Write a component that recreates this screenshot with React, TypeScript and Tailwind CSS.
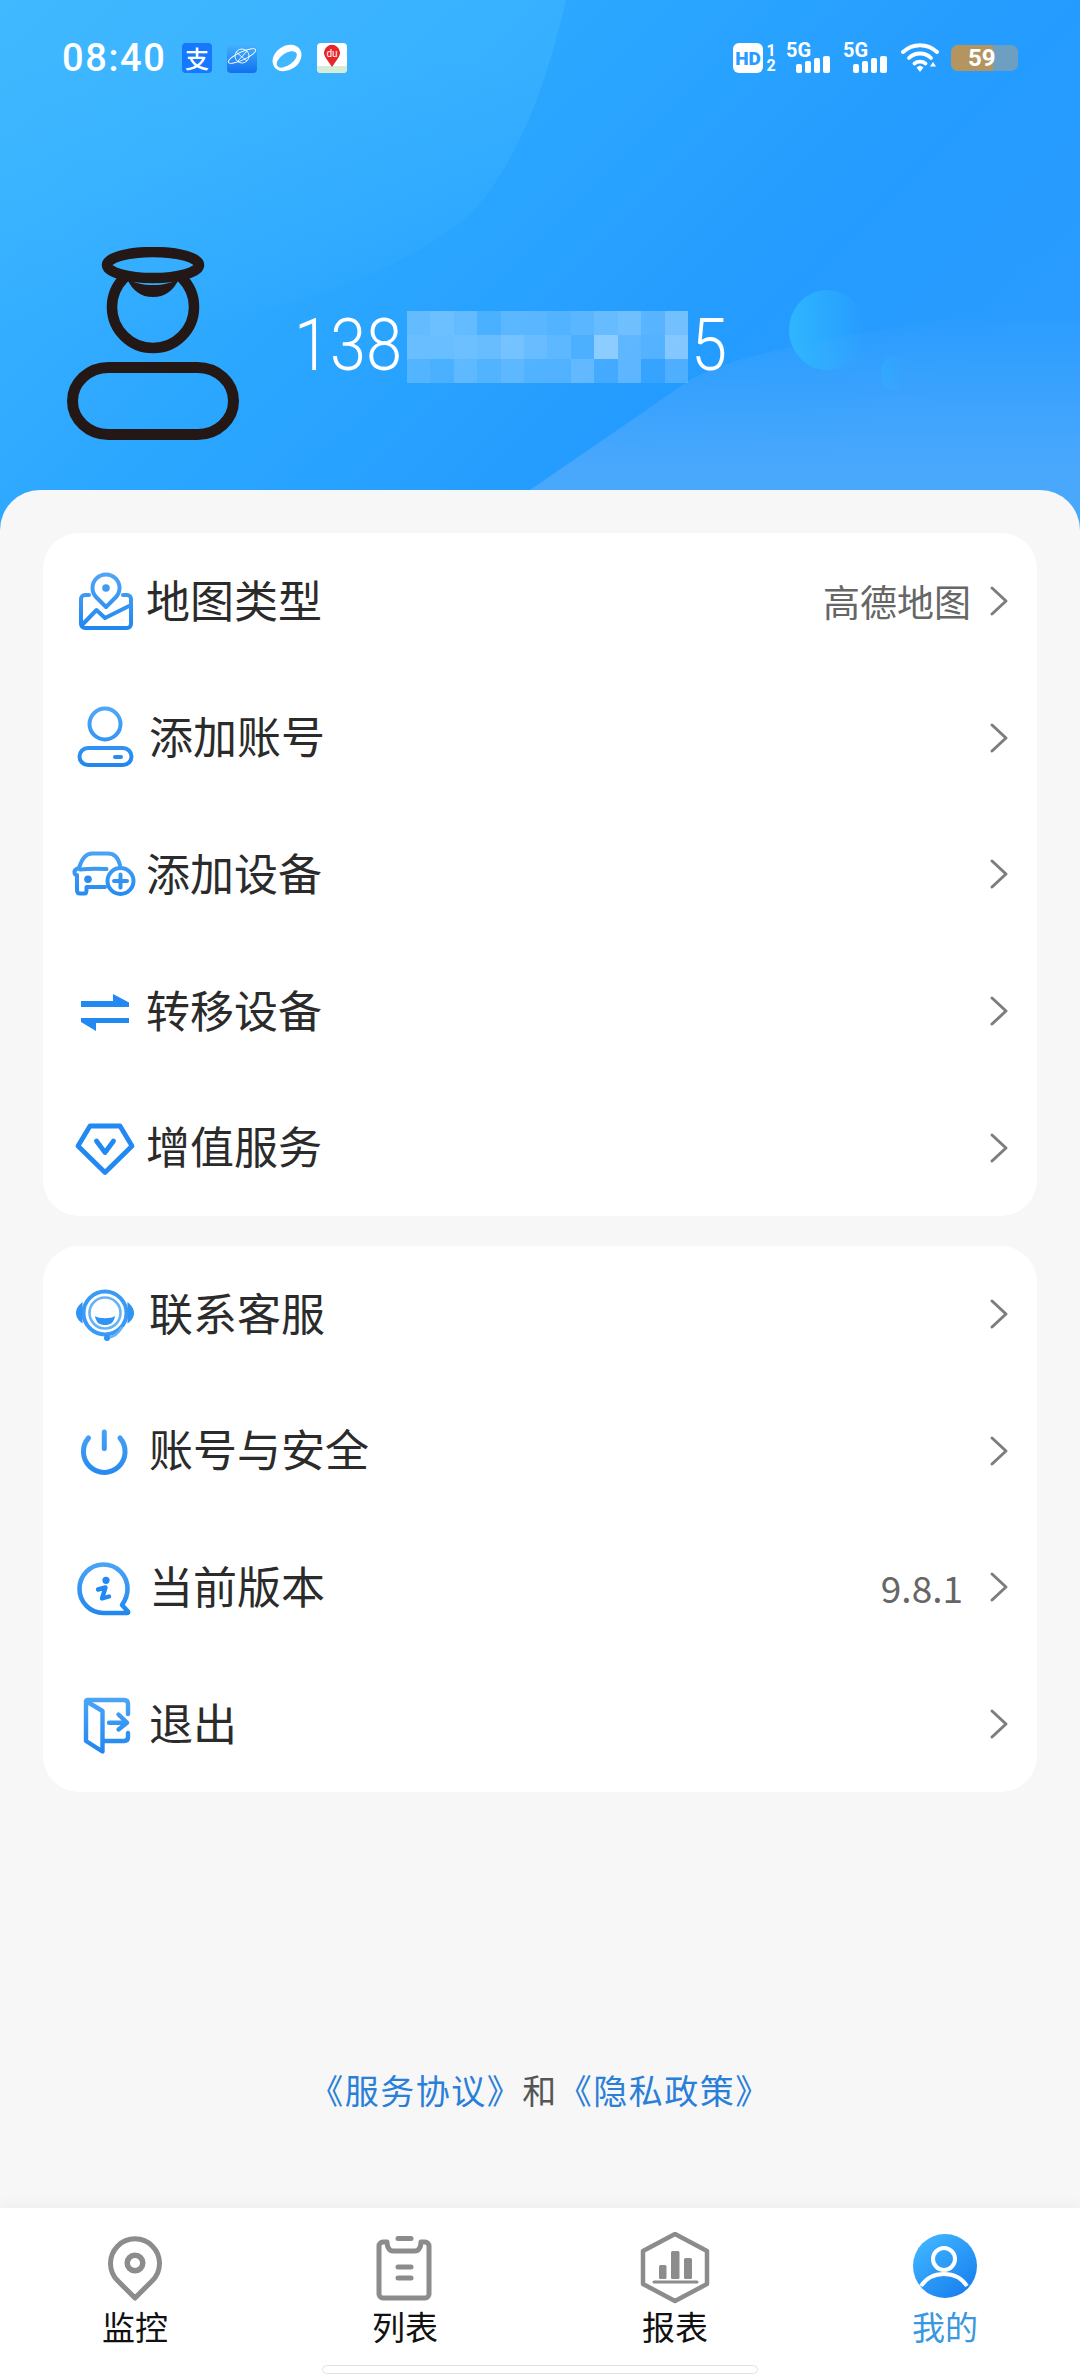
import React from 'react';

const CJK = "font-['Noto_Sans_CJK_SC','Noto_Sans',sans-serif]";

// stroke/fill shortcuts for the blue menu glyphs
const blue = { fill: 'none', stroke: 'url(#menuBlue)', strokeLinecap: 'round', strokeLinejoin: 'round' } as const;

const Icon72: React.FC<{ children: React.ReactNode }> = ({ children }) => (
    <svg width="72" height="72" viewBox="0 0 72 72" className="block">{children}</svg>
);

const MapIcon = () => (
    <Icon72>
        <g {...blue} strokeWidth="4">
            <path d="M20 30H16a4 4 0 0 0-4 4V59a4 4 0 0 0 4 4H58a4 4 0 0 0 4-4V34a4 4 0 0 0-4-4H54" />
            <path d="M37 42L27.5 32.5A13.5 13.5 0 1 1 46.5 32.5Z" />
            <path d="M14 59L27.5 45L36 53L60 41" />
        </g>
        <circle cx="37" cy="23" r="3.8" fill="#3f9bf3" />
    </Icon72>
);

const UserIcon = () => (
    <Icon72>
        <g {...blue} strokeWidth="4">
            <circle cx="36" cy="22" r="15.5" />
            <rect x="10.5" y="46" width="52" height="17" rx="8.5" />
        </g>
        <path d="M46 55H52" stroke="#2a8cf0" strokeWidth="4" strokeLinecap="round" />
    </Icon72>
);

const CarIcon = () => (
    <Icon72>
        <g {...blue} strokeWidth="4">
            <path d="M51 27C49 19 45 15.5 39 15.5H23C17 15.5 13 20 10 30C7 31 5 33 5.5 35C6 37 8 37 8 37V52C8 54 9 55.5 11 55.5H15.5C17 55.5 17.5 54 17.5 52V49H36" />
            <path d="M11 31.5C20 30.5 30 30.5 37.5 31" />
            <circle cx="51.5" cy="43" r="13" />
            <path d="M51.5 36.5V49.5M45 43H58" />
        </g>
        <circle cx="19" cy="41.3" r="3.8" fill="#2a8cf0" />
    </Icon72>
);

const TransferIcon = () => (
    <Icon72>
        <polygon points="12,26 44,26 44,19 60,27.5 60,32 12,32" fill="#2389f2" />
        <polygon points="60,43 60,48 27,48 27,56 12,47 12,43" fill="#2389f2" />
    </Icon72>
);

const DiamondIcon = () => (
    <Icon72>
        <g fill="none" stroke="#2389f2" strokeWidth="4.8" strokeLinejoin="round" strokeLinecap="round">
            <path d="M21 14H51L63 34L36 60.5L9 34Z" />
            <path d="M27.5 29L36 40.5L44.5 29" />
        </g>
    </Icon72>
);

const HeadsetIcon = () => (
    <Icon72>
        <circle cx="36" cy="35" r="21.5" fill="none" stroke="#3a9af5" strokeWidth="4" />
        <circle cx="36" cy="35" r="15.5" fill="none" stroke="#66b3f7" strokeWidth="2.6" />
        <path d="M13.5 24C9.5 27 7 31 7 35C7 39 9.5 43 13.5 45.5Z" fill="#2f94f4" />
        <path d="M58.5 24C62.5 27 65 31 65 35C65 39 62.5 43 58.5 45.5Z" fill="#2f94f4" />
        <path d="M26 38C30 41 42 41 46 38C45 45 41 47 36 47C31 47 27 45 26 38Z" fill="#2f94f4" />
        <path d="M53 49C50 55 46 59 38 60" fill="none" stroke="#66b3f7" strokeWidth="2.6" />
        <circle cx="38" cy="60" r="3" fill="#2f94f4" />
    </Icon72>
);

const PowerIcon = () => (
    <Icon72>
        <g {...blue} strokeWidth="5">
            <path d="M19.5 23A20.8 20.8 0 1 0 51 23" />
            <path d="M35.3 17V33.5" />
        </g>
    </Icon72>
);

const InfoIcon = () => (
    <Icon72>
        <g {...blue} strokeWidth="4.6">
            <path d="M34.5 62C21 62 10.5 51 10.5 38C10.5 24.5 21 13.5 34.5 13.5C48 13.5 58.5 24.5 58.5 38C58.5 44 56.5 49 53 54L59 60.5C59.5 61.5 59 62 58 62Z" />
        </g>
        <circle cx="37" cy="29.3" r="3.6" fill="#2389f2" />
        <path d="M29 38.5L36.5 36.5L33 47.5L40 45.5" fill="none" stroke="#2389f2" strokeWidth="4.4" strokeLinecap="round" strokeLinejoin="round" />
    </Icon72>
);

const ExitIcon = () => (
    <Icon72>
        <g {...blue} strokeWidth="4.4">
            <path d="M18 12H55C57.5 12 59 13.5 59 16V26" />
            <path d="M59 45V49C59 51.5 57.5 53 55 53H34" />
            <path d="M17 13V53L33.5 63.5V23Z" />
            <path d="M40 34.7H58M49.5 26.5L58 34.7L49.5 41.5" />
        </g>
    </Icon72>
);

const Chevron = () => (
    <svg width="20" height="32" viewBox="0 0 20 32" className="block ml-[18px]">
        <path d="M3 3L17 16L3 29" fill="none" stroke="#7d7d7d" strokeWidth="3" strokeLinecap="round" strokeLinejoin="round" />
    </svg>
);

interface MenuRowProps {
    icon: React.ReactNode;
    label: string;
    value?: string;
    shifted?: boolean;
    valueGap?: boolean;
}

const MenuRow: React.FC<MenuRowProps> = ({ icon, label, value, shifted, valueGap }) => (
    <div className="h-[136.6px] flex items-center pl-[26px] pr-[28px]">
        <div className="w-[72px] h-[72px] shrink-0">{icon}</div>
        <span className={`${shifted ? 'ml-[8px]' : 'ml-[5px]'} mt-[-5px] text-[44px] leading-none text-[#2b2b2b] ${CJK}`}>{label}</span>
        <div className="ml-auto flex items-center">
            {value && (
                <span className={`${valueGap ? 'mr-[8px]' : ''} text-[37px] leading-none text-[#666666] ${CJK}`}>{value}</span>
            )}
            <Chevron />
        </div>
    </div>
);

// blurred tiles over the middle of the phone number
const mosaic = [
    [0.28, 0.32, 0.28, 0.16, 0.24, 0.24, 0.2, 0.24, 0.3, 0.34, 0.24, 0.36],
    [0.3, 0.3, 0.32, 0.3, 0.36, 0.3, 0.26, 0.18, 0.48, 0.26, 0.22, 0.44],
    [0.2, 0.16, 0.26, 0.2, 0.26, 0.2, 0.2, 0.28, 0.14, 0.26, 0.08, 0.2],
];

const PhoneNumber = () => (
    <div className="flex items-start ml-[55px] mt-[6px]">
        <span className="font-['Roboto',sans-serif] font-light text-[65px] leading-[72px] text-white w-[113px] mt-[-6px] scale-y-[1.12] origin-top">138</span>
        <div className="grid grid-cols-12 w-[281px]">
            {mosaic.flat().map((a, i) => (
                <div key={i} className="h-[24px] bg-white" style={{ opacity: a }} />
            ))}
        </div>
        <span className="font-['Roboto',sans-serif] font-light text-[65px] leading-[72px] text-white ml-[3px] mt-[-6px] scale-y-[1.12] origin-top">5</span>
    </div>
);

const Avatar = () => (
    <svg width="172" height="194" viewBox="0 0 172 194" className="block shrink-0">
        <g fill="none" stroke="#231815">
            <circle cx="86" cy="60" r="41" strokeWidth="10.5" />
            <rect x="5.5" y="120.500" width="161" height="67" rx="36" strokeWidth="11" />
            <ellipse cx="86" cy="18" rx="46" ry="13" strokeWidth="10.5" fill="#35aeff" />
        </g>
        <path d="M60 32C66 44 74 50 86 50C98 50 106 44 112 32C98 40 74 40 60 32Z" fill="#231815" />
    </svg>
);

const StatusLeft = () => (
    <div className="flex items-center">
        <span className="font-['Roboto',sans-serif] font-medium text-[38px] leading-none tracking-[1.6px] text-white w-[120px]">08:40</span>
        <div className={`w-[30px] h-[30px] rounded-[4px] bg-[#1677ff] flex items-center justify-center text-white text-[24px] leading-none font-medium ${CJK}`}>支</div>
        <svg width="30" height="30" viewBox="0 0 30 30" className="block ml-[15px]">
            <defs>
                <linearGradient id="planetTile" x1="0" y1="0" x2="0" y2="1">
                    <stop offset="0" stopColor="#45b4ff" />
                    <stop offset="1" stopColor="#1270ee" />
                </linearGradient>
            </defs>
            <rect width="30" height="30" rx="4" fill="url(#planetTile)" />
            <g fill="none" stroke="#ffffff" strokeWidth="0.9">
                <circle cx="15" cy="13" r="7" />
                <ellipse cx="15" cy="13" rx="15" ry="4" transform="rotate(-25 15 13)" />
                <path d="M9 9L20 18M20 8L11 18" />
            </g>
        </svg>
        <svg width="30" height="30" viewBox="0 0 30 30" className="block ml-[15px]">
            <ellipse cx="15" cy="15" rx="15.5" ry="12" fill="#ffffff" transform="rotate(-35 15 15)" />
            <ellipse cx="14" cy="16" rx="11.5" ry="6" fill="#41b7ff" transform="rotate(-35 15 15)" />
        </svg>
        <div className="relative w-[30px] h-[30px] ml-[15px] rounded-[4px] bg-white overflow-hidden">
            <div className="absolute bottom-0 left-0 right-0 h-[7px] bg-[#d6ecd8]" />
            <svg width="30" height="30" viewBox="0 0 30 30" className="absolute inset-0">
                <path d="M15 24L8.5 14.5A8 8 0 1 1 21.5 14.5Z" fill="#e8252b" />
            </svg>
            <span className="absolute top-[4px] left-0 right-0 text-center text-white text-[10px] leading-[14px] font-['Roboto',sans-serif]">du</span>
        </div>
    </div>
);

const Signal = () => (
    <div className="relative w-[45px] h-[30px]">
        <span className="absolute left-0 top-0 font-['Roboto',sans-serif] font-bold text-[20px] leading-[15px] text-white">5G</span>
        <div className="absolute left-[10px] bottom-0 flex items-end gap-[3px]">
            <div className="w-[6px] h-[9px] rounded-[2px] bg-white" />
            <div className="w-[6px] h-[12px] rounded-[2px] bg-white" />
            <div className="w-[6px] h-[15px] rounded-[2px] bg-white" />
            <div className="w-[7px] h-[17px] rounded-[2px] bg-white" />
        </div>
    </div>
);

const StatusRight = () => (
    <div className="flex items-center">
        <div className="w-[30px] h-[30px] rounded-[6px] bg-white flex items-center justify-center font-['Roboto',sans-serif] font-black text-[19px] leading-none text-[#2a9cff]">HD</div>
        <div className="w-[12px] ml-[2px] flex flex-col items-center font-['Roboto',sans-serif] font-bold text-[16px] leading-[15px] text-white">
            <span>1</span>
            <span>2</span>
        </div>
        <div className="ml-[9px]"><Signal /></div>
        <div className="ml-[12px]"><Signal /></div>
        <svg width="38" height="30" viewBox="0 0 38 30" className="block ml-[13px]">
            <g fill="none" stroke="#ffffff" strokeWidth="3.8" strokeLinecap="round">
                <path d="M2 9C12 0 26 0 36 9" />
                <path d="M8 15C14 9 24 9 30 15" />
                <path d="M13.5 20.5C16.5 18 21.5 18 24.5 20.5" />
            </g>
            <path d="M15.5 24.5L19 22.5L22.5 24.5L19 29Z" fill="#ffffff" />
            <path d="M32 19L35 23.5H29Z" fill="#ffffff" />
        </svg>
        <div className="relative w-[67px] h-[26px] ml-[12px] rounded-[7px] bg-[#6f9fc0]">
            <div className="absolute left-0 top-0 bottom-0 w-[42px] rounded-l-[7px] bg-[#b4955f]" />
            <span className="absolute left-[17px] top-0 font-['Roboto',sans-serif] font-bold text-[24px] leading-[26px] text-white">59</span>
        </div>
    </div>
);

const HeaderBackdrop = () => (
    <svg width="1080" height="530" viewBox="0 0 1080 530" className="absolute left-0 top-0">
        <defs>
            <linearGradient id="headerBase" x1="0" y1="0" x2="1" y2="0.5">
                <stop offset="0" stopColor="#3db6ff" />
                <stop offset="0.5" stopColor="#2aa5ff" />
                <stop offset="0.8" stopColor="#249bff" />
                <stop offset="1" stopColor="#2a9cff" />
            </linearGradient>
            <linearGradient id="bubble" x1="0" y1="0" x2="1" y2="0">
                <stop offset="0" stopColor="#2fb6ff" />
                <stop offset="1" stopColor="#2fb6ff" stopOpacity="0" />
            </linearGradient>
            <linearGradient id="glow" gradientUnits="userSpaceOnUse" x1="300" y1="60" x2="300" y2="340">
                <stop offset="0" stopColor="#46bcff" stopOpacity="0.4" />
                <stop offset="1" stopColor="#46bcff" stopOpacity="0" />
            </linearGradient>
            <linearGradient id="slope" gradientUnits="userSpaceOnUse" x1="0" y1="310" x2="0" y2="470">
                <stop offset="0" stopColor="#4aa8fc" stopOpacity="0" />
                <stop offset="1" stopColor="#4aa8fc" />
            </linearGradient>
        </defs>
        <rect width="1080" height="530" fill="url(#headerBase)" />
        <path d="M0 0H566C540 110 510 170 470 215C380 290 200 340 0 350Z" fill="url(#glow)" />
        <path d="M530 490L690 380C760 340 960 320 1080 300V530H530Z" fill="url(#slope)" />
        <ellipse cx="827" cy="330" rx="38" ry="40" fill="url(#bubble)" />
        <ellipse cx="893" cy="373" rx="12" ry="17" fill="url(#bubble)" opacity="0.4" />
    </svg>
);

interface TabProps {
    label: string;
    active?: boolean;
    children: React.ReactNode;
}

const Tab: React.FC<TabProps> = ({ label, active, children }) => (
    <div className="flex-1 flex flex-col items-center">
        <div className="h-[72px]">{children}</div>
        <span className={`mt-[2px] text-[33px] leading-[40px] ${active ? 'text-[#3a97e0]' : 'text-[#111111]'} ${CJK}`}>{label}</span>
    </div>
);

export default function App() {
    return (
        <div className="relative w-[1080px] h-[2376px] overflow-hidden flex flex-col bg-[#f7f7f7]">
            <HeaderBackdrop />

            <svg width="0" height="0" className="absolute">
                <defs>
                    <linearGradient id="menuBlue" gradientUnits="userSpaceOnUse" x1="0" y1="8" x2="0" y2="66">
                        <stop offset="0" stopColor="#4ea6f6" />
                        <stop offset="1" stopColor="#1f86f0" />
                    </linearGradient>
                </defs>
            </svg>

            <div className="relative h-[490px] shrink-0 px-[62px]">
                <div className="flex items-center justify-between pt-[39px]">
                    <StatusLeft />
                    <StatusRight />
                </div>
                <div className="flex items-center mt-[170px] ml-[5px]">
                    <Avatar />
                    <PhoneNumber />
                </div>
            </div>

            <div className="relative flex-1 flex flex-col rounded-t-[40px] bg-[#f7f7f7] px-[43px] pt-[43px]">
                <div className="rounded-[36px] bg-white">
                    <MenuRow icon={<MapIcon />} label="地图类型" value="高德地图" />
                    <MenuRow icon={<UserIcon />} label="添加账号" shifted />
                    <MenuRow icon={<CarIcon />} label="添加设备" />
                    <MenuRow icon={<TransferIcon />} label="转移设备" />
                    <MenuRow icon={<DiamondIcon />} label="增值服务" />
                </div>
                <div className="mt-[30px] rounded-[36px] bg-white">
                    <MenuRow icon={<HeadsetIcon />} label="联系客服" shifted />
                    <MenuRow icon={<PowerIcon />} label="账号与安全" shifted />
                    <MenuRow icon={<InfoIcon />} label="当前版本" value="9.8.1" shifted valueGap />
                    <MenuRow icon={<ExitIcon />} label="退出" shifted />
                </div>
                <p className={`mt-auto mb-[96px] text-center text-[34px] tracking-[1.5px] leading-[44px] text-[#2a7fd8] ${CJK}`}>
                    《服务协议》<span className="text-[#555555]">和</span>《隐私政策》
                </p>
            </div>

            <div className="relative h-[168px] shrink-0 bg-white pt-[24px] shadow-[0_-4px_12px_rgba(0,0,0,0.04)]">
                <div className="flex">
                    <Tab label="监控">
                        <Icon72>
                            <path d="M36 66L19 49A24.5 24.5 0 1 1 53 49Z" fill="none" stroke="#8c8c8c" strokeWidth="5" strokeLinejoin="round" />
                            <circle cx="36" cy="31" r="7.8" fill="none" stroke="#8c8c8c" strokeWidth="5.5" />
                        </Icon72>
                    </Tab>
                    <Tab label="列表">
                        <Icon72>
                            <path d="M18 10H14a4 4 0 0 0-4 4V62a4 4 0 0 0 4 4H56a4 4 0 0 0 4-4V14a4 4 0 0 0-4-4H52C52 16 49 19 46 19H24C21 19 18 16 18 10Z" fill="none" stroke="#8c8c8c" strokeWidth="5" strokeLinejoin="round" />
                            <g stroke="#8c8c8c" strokeWidth="5" strokeLinecap="round">
                                <path d="M29 6.5H42" />
                                <path d="M29 35H42" />
                                <path d="M29 46H42" />
                            </g>
                        </Icon72>
                    </Tab>
                    <Tab label="报表">
                        <Icon72>
                            <polygon points="36,2 68,19 68,52 36,69 4,52 4,19" fill="none" stroke="#8c8c8c" strokeWidth="4.5" strokeLinejoin="round" />
                            <rect x="20" y="33" width="7.5" height="14" rx="1.5" fill="#8c8c8c" />
                            <rect x="32" y="19" width="8.5" height="28" rx="1.5" fill="#8c8c8c" />
                            <rect x="45" y="26" width="8" height="21" rx="1.5" fill="#8c8c8c" />
                            <path d="M15 50H58" stroke="#8c8c8c" strokeWidth="3" strokeLinecap="round" />
                        </Icon72>
                    </Tab>
                    <Tab label="我的" active>
                        <Icon72>
                            <defs>
                                <linearGradient id="meTab" x1="0.15" y1="0.1" x2="0.8" y2="0.9">
                                    <stop offset="0" stopColor="#3fb4ff" />
                                    <stop offset="1" stopColor="#1a82f0" />
                                </linearGradient>
                            </defs>
                            <circle cx="36" cy="34" r="32" fill="url(#meTab)" />
                            <circle cx="35" cy="27" r="11" fill="none" stroke="#ffffff" strokeWidth="4" />
                            <path d="M12 54C18 45 26 42 35 42C44 42 52 45 58 54" fill="none" stroke="#ffffff" strokeWidth="4" />
                        </Icon72>
                    </Tab>
                </div>
                <div className="absolute left-[322px] top-[157px] w-[436px] h-[9px] rounded-full border border-[#e2e2e2] bg-white" />
            </div>
        </div>
    );
}
